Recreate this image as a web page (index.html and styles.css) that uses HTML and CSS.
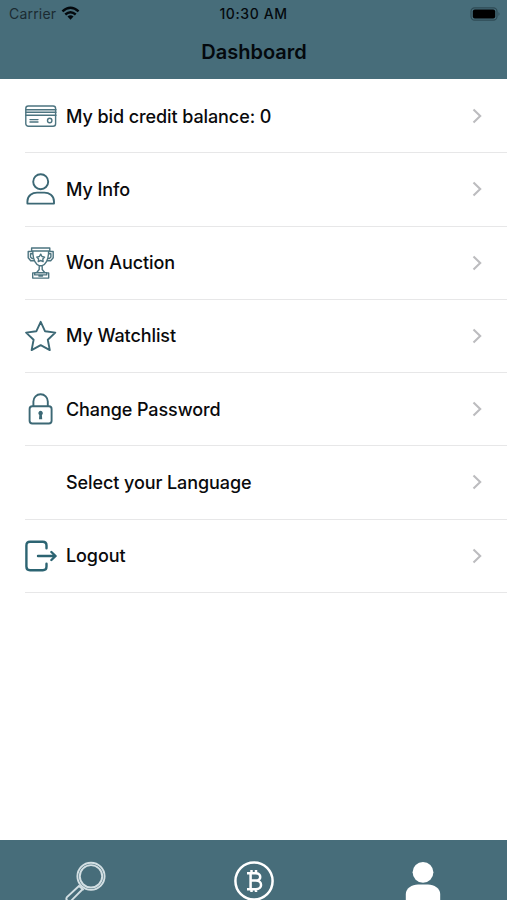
FILE: index.html
```html
<!DOCTYPE html>
<html lang="en">
<head>
<meta charset="utf-8">
<title>Dashboard</title>
<link rel="stylesheet" href="styles.css">
</head>
<body>
<header class="header">
  <div class="status">
    <div class="carrier"><span>Carrier</span>
      <svg class="wifi" viewBox="0 0 20 15"><path d="M1.5 5.2Q10-2.2 18.5 5.2" /><path d="M4.5 8.5Q10 3.8 15.5 8.5"/><path class="solid" d="M6.8 10.6Q10 8 13.2 10.6L10 14.2Z"/></svg>
    </div>
    <time class="time">10:30 AM</time>
    <svg class="battery" viewBox="0 0 31 14"><rect class="shell" x="1" y=".8" width="26" height="12.4" rx="3.6"/><rect x="2.8" y="2.5" width="22.4" height="9" rx="2"/><path class="tip" d="M28.5 5Q30.5 7 28.5 9Z"/></svg>
  </div>
  <h1 class="title">Dashboard</h1>
</header>
<main class="list">
  <a class="row"><svg class="icon thin" viewBox="0 0 32 32"><rect x=".8" y="6" width="29.8" height="20.3" rx="2.5"/><path d="M1 9.8h30M1 12.2h30M1 15.2h30M5 19.6h8M5 22h8"/><circle cx="24.7" cy="20.5" r="2.2"/></svg><span class="label">My bid credit balance: 0</span><svg class="chevron" viewBox="0 0 10 16"><path d="M1.5 1.5 8.2 8l-6.7 6.5"/></svg></a>
  <a class="row"><svg class="icon" viewBox="0 0 32 32"><circle cx="15.7" cy="8.7" r="7.5"/><path d="M2.4 30.6V28.4C2.4 22.5 7.5 19.6 12 19.6h7.4c4.5 0 9.6 2.9 9.6 8.8v2.2Z"/></svg><span class="label">My Info</span><svg class="chevron" viewBox="0 0 10 16"><path d="M1.5 1.5 8.2 8l-6.7 6.5"/></svg></a>
  <a class="row"><svg class="icon thin" viewBox="0 0 32 32"><path d="M6.6 1h18.2v3H6.6ZM7.8 4c0 7 .9 12.3 6.4 14.7h3c5.5-2.4 6.4-7.7 6.4-14.7M7.4 4.5H3.2v6.2l2.5 3h3.6M7.8 6.8H5.5V10l1.5 1.5h1.2M24 4.5h4.2v6.2l-2.5 3h-3.6M23.6 6.8h2.3V10l-1.5 1.5h-1.2M14.2 18.7v3.8l-2.7 3.2M17.2 18.7v3.8l2.7 3.2M9.7 25.7h12v2.2h-12ZM7.7 25.9h16v5.2h-16ZM13.9 29h3.6M15.7 7.2l1.3 2.3 2.6.6-1.8 1.9.3 2.6-2.4-1.1-2.4 1.1.3-2.6-1.8-1.9 2.6-.6Z"/></svg><span class="label">Won Auction</span><svg class="chevron" viewBox="0 0 10 16"><path d="M1.5 1.5 8.2 8l-6.7 6.5"/></svg></a>
  <a class="row"><svg class="icon" viewBox="0 0 32 32"><path d="m15.7 1.8 4.4 9.5 10.2 1.3-7.5 7.1 2 10.4-9.1-5-9.1 5 2-10.4-7.5-7.1 10.2-1.3Z"/></svg><span class="label">My Watchlist</span><svg class="chevron" viewBox="0 0 10 16"><path d="M1.5 1.5 8.2 8l-6.7 6.5"/></svg></a>
  <a class="row"><svg class="icon" viewBox="0 0 32 32"><rect x="4.6" y="13.2" width="22" height="17.3" rx="2.7"/><path d="M8.4 13V8.5a7.2 7.2 0 0 1 14.4 0V13"/><path class="key" d="M15.6 17.8a2.4 2.4 0 0 1 1.3 4.3l.3 4.2H14l.3-4.2a2.4 2.4 0 0 1 1.3-4.3Z"/></svg><span class="label">Change Password</span><svg class="chevron" viewBox="0 0 10 16"><path d="M1.5 1.5 8.2 8l-6.7 6.5"/></svg></a>
  <a class="row"><span class="icon"></span><span class="label">Select your Language</span><svg class="chevron" viewBox="0 0 10 16"><path d="M1.5 1.5 8.2 8l-6.7 6.5"/></svg></a>
  <a class="row"><svg class="icon logout" viewBox="0 0 32 32"><path d="M21.5 8.2V5.4c0-2.4-1.3-3.7-3.7-3.7H5C2.7 1.7 1.4 3 1.4 5.4v21.2C1.4 29 2.7 30.3 5 30.3h12.8c2.4 0 3.7-1.3 3.7-3.7v-2.8M13 16h17M26.4 12l4.2 4-4.2 4"/></svg><span class="label">Logout</span><svg class="chevron" viewBox="0 0 10 16"><path d="M1.5 1.5 8.2 8l-6.7 6.5"/></svg></a>
</main>
<nav class="tabs">
  <a class="tab"><svg class="tab-icon" viewBox="0 0 40 40"><g class="glass"><circle cx="26" cy="15.3" r="13.6"/><circle cx="26" cy="15.3" r="11.2"/><path d="m13.5 24.5 5.2 4.5M14.5 24.5 2 36c-2 3 2 6 4.5 3.3L17.8 28"/></g></svg></a>
  <a class="tab"><svg class="tab-icon" viewBox="0 0 40 40"><g class="coin"><circle cx="20" cy="20" r="18.6"/><path d="M13 12.2h8.8c5.9 0 5.9 7.4 0 7.4h-5M21.8 19.6c7 0 7 8.6 0 8.6H13M16.6 12v16M17.5 9v3M22 9v3M17.5 28v3M22 28v3"/></g></svg></a>
  <a class="tab"><svg class="tab-icon" viewBox="0 0 40 40"><g class="person"><circle cx="20" cy="11.3" r="10.4"/><path d="M2.8 40v-7c0-5.5 6-9.5 12.2-9.5h10c6.2 0 12.2 4 12.2 9.5v7Z"/></g></svg></a>
</nav>
</body>
</html>
```
FILE: styles.css
```css
* { box-sizing: border-box; }
body {
  margin: 0;
  height: 900px;
  overflow: hidden;
  display: flex;
  flex-direction: column;
  background: #fff;
  color: #0a0a0c;
  font-family: Inter, "Liberation Sans", sans-serif;
}
.header { height: 79px; flex: none; background: #476d7a; color: #04090d; }
.status {
  height: 27px;
  display: grid;
  grid-template-columns: 1fr auto 1fr;
  align-items: center;
  padding: 0 6px 0 9px;
  font-size: 14px;
}
.carrier { display: flex; align-items: center; gap: 5px; color: #1b2b32; letter-spacing: .2px; }
.wifi { width: 19px; height: 15px; fill: none; stroke: #04090d; stroke-width: 2.6; }
.wifi .solid { fill: #04090d; stroke: none; }
.time { font-weight: 500; letter-spacing: .6px; margin-right: 3px; }
.battery { width: 31px; height: 14px; justify-self: end; fill: #000; }
.battery .shell { fill: none; stroke: #2f4b55; stroke-width: 1.2; }
.battery .tip { fill: #2f4b55; }
.title { margin: 0; padding-left: 1px; line-height: 51px; text-align: center; font-size: 20px; font-weight: 600; }
.list { flex: 1; padding-top: 1px; }
.row {
  height: 73.25px;
  margin-left: 25px;
  padding-right: 25px;
  display: flex;
  align-items: center;
  border-bottom: 1px solid #e7e7e8;
}
.icon { width: 32px; height: 32px; flex: none; fill: none; stroke: #3c6875; stroke-width: 1.9; stroke-linejoin: round; stroke-linecap: round; }
.thin { stroke: #4c7480; stroke-width: 1.4; }
.logout { stroke: #2c6472; stroke-width: 2.4; }
.key { fill: #3c6875; stroke: none; }
.label { flex: 1; margin-left: 9px; padding-top: 1px; font-size: 18px; line-height: 24px; font-weight: 500; letter-spacing: -.09px; white-space: nowrap; }
.chevron { width: 10px; height: 16px; flex: none; fill: none; stroke: #bcbcbf; stroke-width: 2.1; }
.tabs { height: 60px; flex: none; display: grid; grid-template-columns: repeat(3, 1fr); background: #476d7a; overflow: hidden; }
.tab { display: flex; justify-content: center; padding-top: 21px; }
.tab-icon { width: 40px; height: 40px; flex: none; overflow: visible; }
.glass { fill: none; stroke: #d3dfe3; stroke-width: 1.9; }
.coin { fill: none; stroke: #fff; stroke-width: 2.5; }
.person { fill: #fff; }
```
